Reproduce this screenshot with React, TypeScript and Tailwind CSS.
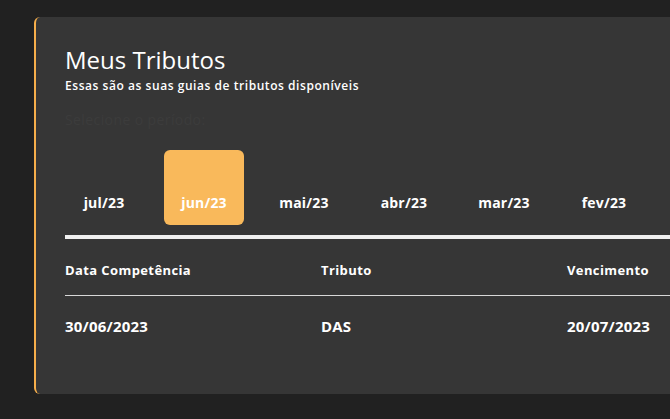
const months = ['jul/23', 'jun/23', 'mai/23', 'abr/23', 'mar/23', 'fev/23'];

export default function App() {
  return (
    <div
      className="h-[419px] w-[670px] overflow-hidden bg-[#212121] pl-[34px] pt-[17px]"
      style={{ fontFamily: '"Open Sans", "Noto Sans", sans-serif' }}
    >
      <div className="h-[377px] w-[700px] rounded-l-md border-l-2 border-[#f6ae4b] bg-[#363636] pl-[29px] pt-[27px] text-white">
        <h1 className="text-[24px] leading-[32px]">Meus Tributos</h1>
        <p className="mt-[2px] text-[12px] font-semibold leading-[16px] tracking-[0.55px]">
          Essas são as suas guias de tributos disponíveis
        </p>
        <p className="mt-[17px] text-[14px] leading-[18px] tracking-[0.4px] text-[#3c3c3c]">Selecione o período:</p>

        {/* period tabs */}
        <div className="-ml-px mt-[21px] flex gap-5">
          {months.map((m) => (
            <button
              key={m}
              type="button"
              className={`flex h-[75px] w-20 items-end justify-center rounded-md pb-[12px] text-[14px] font-bold tracking-[0.2px] ${
                m === 'jun/23' ? 'bg-[#f9b95b]' : ''
              }`}
            >
              {m}
            </button>
          ))}
        </div>
        <div className="mt-[10px] h-1 bg-[#f0f0f0]" />

        {/* table */}
        <div className="grid grid-cols-[256px_246px_1fr] pt-[22px] text-[13px] font-bold leading-[18px] tracking-[0.4px]">
          <span>Data Competência</span>
          <span>Tributo</span>
          <span>Vencimento</span>
        </div>
        <div className="mt-[16px] h-px bg-[#d8d8d8]" />
        <div className="grid grid-cols-[256px_246px_1fr] pt-[21px] text-[15px] font-bold leading-[18px] tracking-[0.2px]">
          <span>30/06/2023</span>
          <span>DAS</span>
          <span>20/07/2023</span>
        </div>
      </div>
    </div>
  );
}
